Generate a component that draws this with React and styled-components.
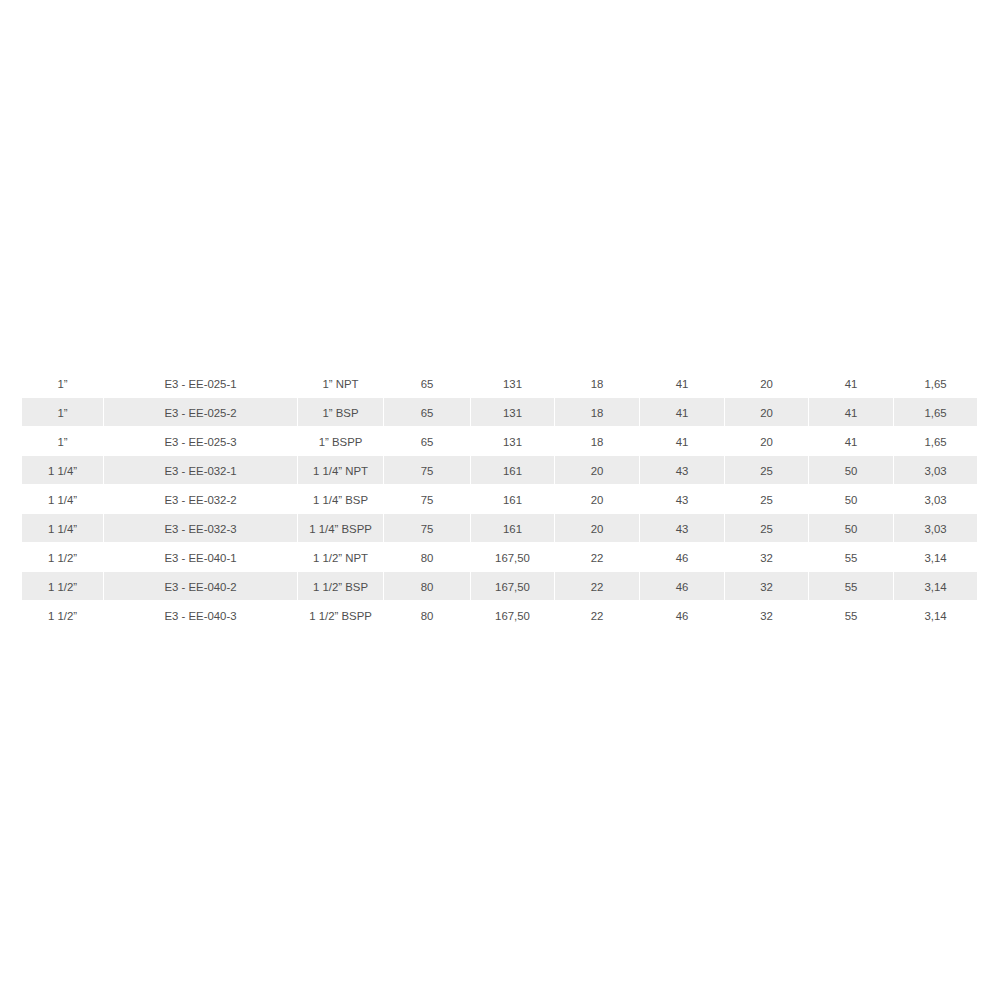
import React from "react";
import styled, { createGlobalStyle } from "styled-components";

const Global = createGlobalStyle`
  html, body { margin: 0; padding: 0; background: #fff; }
  body { font-family: "Liberation Sans", Arial, Helvetica, sans-serif; }
`;

const Page = styled.div`
  padding: 369px 22px 0 22px;
  width: 1000px;
  box-sizing: border-box;
`;

const Table = styled.div`
  display: flex;
  flex-direction: column;
  gap: 1px;
  width: 955px;
`;

const Row = styled.div`
  display: grid;
  grid-template-columns: 81px 193px 85px 86px 83px 84px 84px 83px 84px 83px;
  column-gap: 1px;
  height: 28px;
`;

const Cell = styled.div`
  display: flex;
  align-items: center;
  justify-content: center;
  background: ${(p) => (p.$shaded ? "#ececec" : "#fff")};
  color: #4f4f4f;
  font-size: 11.4px;
  padding-top: 2px;
  box-sizing: border-box;
  white-space: nowrap;
`;

const data = [
  ["1”", "E3 - EE-025-1", "1” NPT", "65", "131", "18", "41", "20", "41", "1,65"],
  ["1”", "E3 - EE-025-2", "1” BSP", "65", "131", "18", "41", "20", "41", "1,65"],
  ["1”", "E3 - EE-025-3", "1” BSPP", "65", "131", "18", "41", "20", "41", "1,65"],
  ["1 1/4”", "E3 - EE-032-1", "1 1/4” NPT", "75", "161", "20", "43", "25", "50", "3,03"],
  ["1 1/4”", "E3 - EE-032-2", "1 1/4” BSP", "75", "161", "20", "43", "25", "50", "3,03"],
  ["1 1/4”", "E3 - EE-032-3", "1 1/4” BSPP", "75", "161", "20", "43", "25", "50", "3,03"],
  ["1 1/2”", "E3 - EE-040-1", "1 1/2” NPT", "80", "167,50", "22", "46", "32", "55", "3,14"],
  ["1 1/2”", "E3 - EE-040-2", "1 1/2” BSP", "80", "167,50", "22", "46", "32", "55", "3,14"],
  ["1 1/2”", "E3 - EE-040-3", "1 1/2” BSPP", "80", "167,50", "22", "46", "32", "55", "3,14"],
];

export default function App() {
  return (
    <>
      <Global />
      <Page>
        <Table>
          {data.map((row, i) => (
            <Row key={i}>
              {row.map((c, j) => (
                <Cell key={j} $shaded={i % 2 === 1}>
                  {c}
                </Cell>
              ))}
            </Row>
          ))}
        </Table>
      </Page>
    </>
  );
}
